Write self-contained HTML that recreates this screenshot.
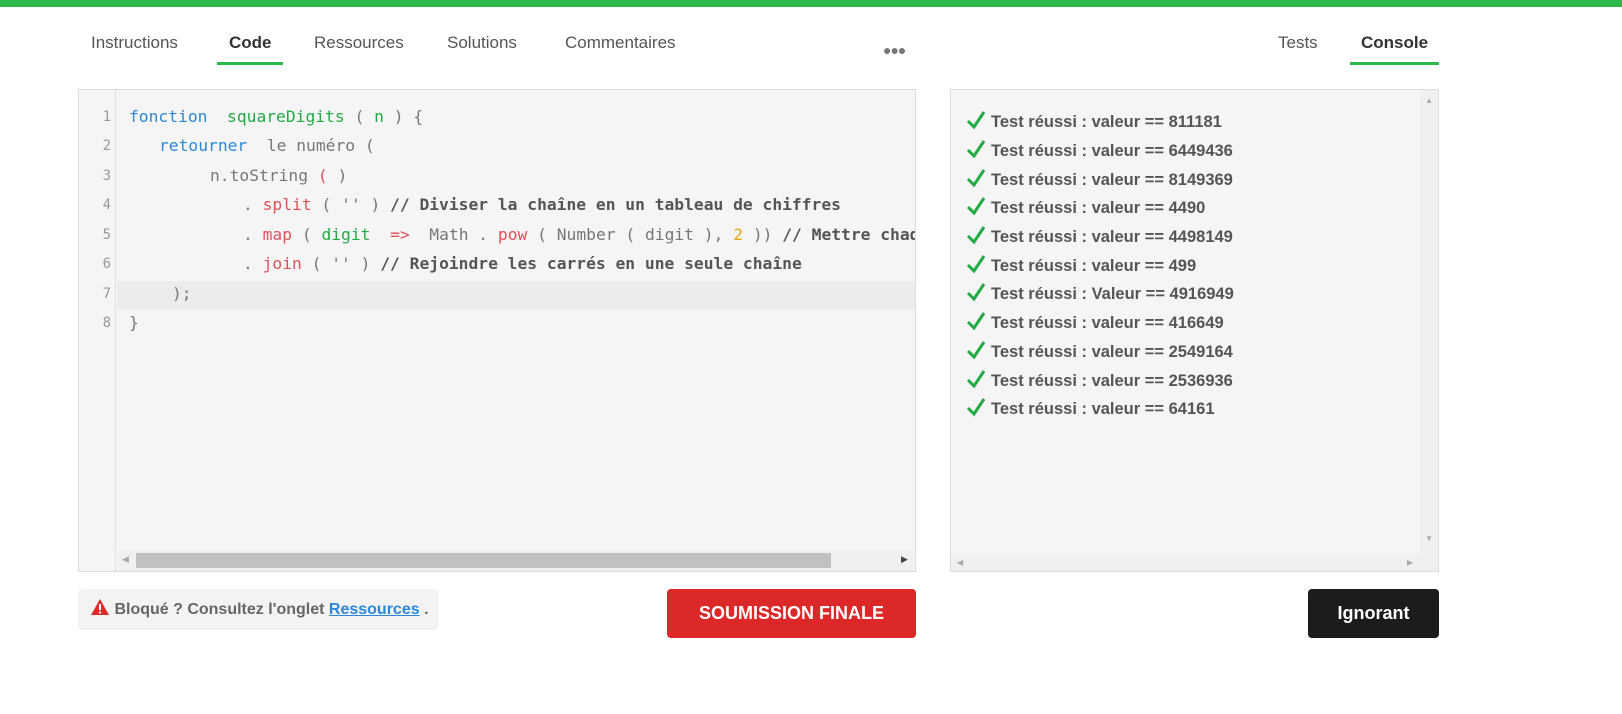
<!DOCTYPE html>
<html><head><meta charset="utf-8"><style>
*{box-sizing:border-box;margin:0;padding:0}
body{width:1622px;height:714px;background:#fff;position:relative;overflow:hidden;font-family:"Liberation Sans",sans-serif}
.top{position:absolute;left:0;top:0;width:1622px;height:7px;background:#2db84c}
.tab{position:absolute;top:33px;font-size:17px;color:#555}
.ul{position:absolute;top:62px;height:3px;background:#2db84c}
.ed{position:absolute;left:78px;top:89px;width:838px;height:483px;background:#f5f5f5;border:1px solid #ddd}
.gut{position:absolute;left:0;top:0;width:37px;height:100%;border-right:1px solid #e0e0e0}
.ln{position:absolute;left:0;width:32px;text-align:right;font-family:"DejaVu Sans Mono",monospace;font-size:14px;color:#999}
.cl{position:absolute;font-family:"DejaVu Sans Mono","Liberation Mono",monospace;font-size:16.3px;color:#777;white-space:pre}
.b{color:#2b88d8}.g{color:#22aa44}.r{color:#e0505a}.y{color:#e6a817}.c{color:#555;font-weight:bold}
.con{position:absolute;left:950px;top:89px;width:489px;height:483px;background:#f5f5f5;border:1px solid #ddd}
.t{position:absolute;left:16px;font-size:16.5px;font-weight:bold;color:#555;white-space:nowrap}
.t svg{vertical-align:-3px;margin-right:5px}
</style></head><body>
<div class="top"></div>
<div class="tab" style="left:91px">Instructions</div>
<div class="tab" style="left:229px;font-weight:bold;color:#333">Code</div>
<div class="ul" style="left:217px;width:66px"></div>
<div class="tab" style="left:314px">Ressources</div>
<div class="tab" style="left:447px">Solutions</div>
<div class="tab" style="left:565px">Commentaires</div>
<div style="position:absolute;left:883px;top:42px;font-size:14px;color:#777;letter-spacing:-1px">●●●</div>
<div class="tab" style="left:1278px">Tests</div>
<div class="tab" style="left:1361px;font-weight:bold;color:#333">Console</div>
<div class="ul" style="left:1350px;width:89px"></div>

<div class="ed">
<div class="gut"></div>
<div style="position:absolute;left:38px;top:191px;width:798px;height:29px;background:#ececec"></div>
<div class="ln" style="top:19px">1</div><div class="ln" style="top:48px">2</div><div class="ln" style="top:78px">3</div><div class="ln" style="top:107px">4</div><div class="ln" style="top:137px">5</div><div class="ln" style="top:166px">6</div><div class="ln" style="top:196px">7</div><div class="ln" style="top:225px">8</div>
<div style="position:absolute;left:38px;top:0;width:798px;height:100%;overflow:hidden">
<div class="cl" style="left:12px;top:17px"><span class="b">fonction</span>  <span class="g">squareDigits</span> ( <span class="g">n</span> ) {</div>
<div class="cl" style="left:42px;top:46px"><span class="b">retourner</span>  le numéro (</div>
<div class="cl" style="left:93px;top:76px">n.toString <span class="r">(</span> )</div>
<div class="cl" style="left:126px;top:105px">. <span class="r">split</span> ( '' ) <span class="c">// Diviser la chaîne en un tableau de chiffres</span></div>
<div class="cl" style="left:126px;top:135px">. <span class="r">map</span> ( <span class="g">digit</span>  <span class="r">=&gt;</span>  Math . <span class="r">pow</span> ( Number ( digit ), <span class="y">2</span> )) <span class="c">// Mettre chaque chiffre au carré</span></div>
<div class="cl" style="left:126px;top:164px">. <span class="r">join</span> ( '' ) <span class="c">// Rejoindre les carrés en une seule chaîne</span></div>
<div class="cl" style="left:55px;top:194px">);</div>
<div class="cl" style="left:12px;top:223px">}</div>
</div>
<div style="position:absolute;left:38px;bottom:0;width:798px;height:20px;background:#f0f0f0"></div>
<div style="position:absolute;left:57px;bottom:3px;width:695px;height:15px;background:#c1c1c1"></div>
<div style="position:absolute;left:43px;bottom:6px;font-size:9px;color:#aaa">◀</div>
<div style="position:absolute;left:822px;bottom:6px;font-size:9px;color:#444">▶</div>
</div>

<div class="con">
<div style="position:absolute;right:0;top:0;width:18px;height:100%;background:#f0f0f0"></div>
<div style="position:absolute;right:5px;top:6px;font-size:8px;color:#aaa">▲</div>
<div style="position:absolute;right:5px;bottom:28px;font-size:8px;color:#aaa">▼</div>
<div style="position:absolute;left:0;bottom:0;width:470px;height:18px;background:#f0f0f0"></div>
<div style="position:absolute;left:6px;bottom:4px;font-size:8px;color:#aaa">◀</div>
<div style="position:absolute;left:456px;bottom:4px;font-size:8px;color:#aaa">▶</div>
</div>
<div style="position:absolute;left:950px;top:89px">
<div class="t" style="top:21px"><svg width="20" height="20" viewBox="0 0 20 20"><path d="M2 11 L8 17 L18 2" stroke="#22aa44" stroke-width="3" fill="none"/></svg>Test réussi : valeur == 811181</div>
<div class="t" style="top:50px"><svg width="20" height="20" viewBox="0 0 20 20"><path d="M2 11 L8 17 L18 2" stroke="#22aa44" stroke-width="3" fill="none"/></svg>Test réussi : valeur == 6449436</div>
<div class="t" style="top:79px"><svg width="20" height="20" viewBox="0 0 20 20"><path d="M2 11 L8 17 L18 2" stroke="#22aa44" stroke-width="3" fill="none"/></svg>Test réussi : valeur == 8149369</div>
<div class="t" style="top:107px"><svg width="20" height="20" viewBox="0 0 20 20"><path d="M2 11 L8 17 L18 2" stroke="#22aa44" stroke-width="3" fill="none"/></svg>Test réussi : valeur == 4490</div>
<div class="t" style="top:136px"><svg width="20" height="20" viewBox="0 0 20 20"><path d="M2 11 L8 17 L18 2" stroke="#22aa44" stroke-width="3" fill="none"/></svg>Test réussi : valeur == 4498149</div>
<div class="t" style="top:165px"><svg width="20" height="20" viewBox="0 0 20 20"><path d="M2 11 L8 17 L18 2" stroke="#22aa44" stroke-width="3" fill="none"/></svg>Test réussi : valeur == 499</div>
<div class="t" style="top:193px"><svg width="20" height="20" viewBox="0 0 20 20"><path d="M2 11 L8 17 L18 2" stroke="#22aa44" stroke-width="3" fill="none"/></svg>Test réussi : Valeur == 4916949</div>
<div class="t" style="top:222px"><svg width="20" height="20" viewBox="0 0 20 20"><path d="M2 11 L8 17 L18 2" stroke="#22aa44" stroke-width="3" fill="none"/></svg>Test réussi : valeur == 416649</div>
<div class="t" style="top:251px"><svg width="20" height="20" viewBox="0 0 20 20"><path d="M2 11 L8 17 L18 2" stroke="#22aa44" stroke-width="3" fill="none"/></svg>Test réussi : valeur == 2549164</div>
<div class="t" style="top:280px"><svg width="20" height="20" viewBox="0 0 20 20"><path d="M2 11 L8 17 L18 2" stroke="#22aa44" stroke-width="3" fill="none"/></svg>Test réussi : valeur == 2536936</div>
<div class="t" style="top:308px"><svg width="20" height="20" viewBox="0 0 20 20"><path d="M2 11 L8 17 L18 2" stroke="#22aa44" stroke-width="3" fill="none"/></svg>Test réussi : valeur == 64161</div>
</div>

<div style="position:absolute;left:78px;top:589px;width:360px;height:41px;background:#f3f3f3;border-radius:4px;padding:9px 0 0 12px;font-size:16px;font-weight:bold;color:#666;white-space:nowrap">
<svg width="20" height="18" viewBox="0 0 20 18" style="vertical-align:-2px"><path d="M10 1 L19 17 L1 17Z" fill="#dd2a2a"/><rect x="9" y="6" width="2" height="6" fill="#fff"/><rect x="9" y="13.5" width="2" height="2" fill="#fff"/></svg> Bloqué ? Consultez l'onglet <span style="color:#2b88d8;text-decoration:underline">Ressources</span> .</div>
<div style="position:absolute;left:667px;top:589px;width:249px;height:49px;background:#dc2828;border-radius:4px;color:#fff;font-weight:bold;font-size:18px;text-align:center;line-height:49px">SOUMISSION FINALE</div>
<div style="position:absolute;left:1308px;top:589px;width:131px;height:49px;background:#1c1c1c;border-radius:4px;color:#fff;font-weight:bold;font-size:18px;text-align:center;line-height:49px">Ignorant</div>
</body></html>
